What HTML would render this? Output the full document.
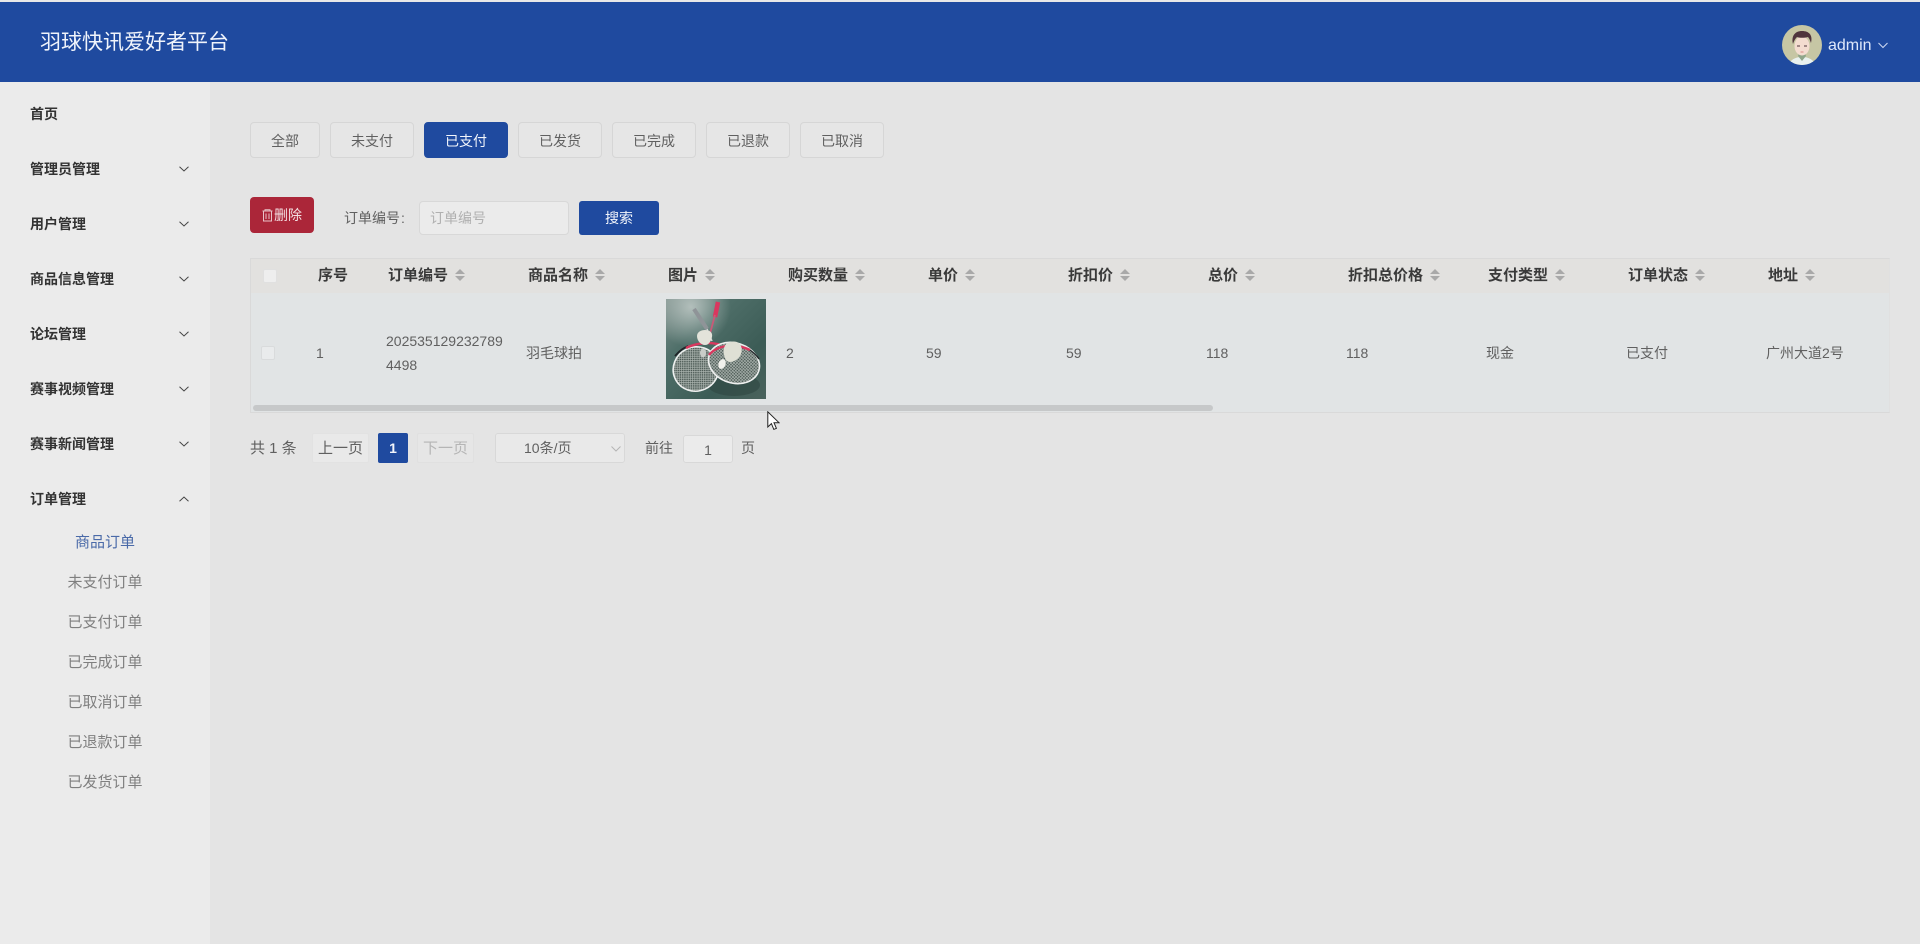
<!DOCTYPE html>
<html lang="zh-CN">
<head>
<meta charset="utf-8">
<title>羽球快讯爱好者平台</title>
<style>
*{box-sizing:border-box;margin:0;padding:0}
html,body{width:1920px;height:944px;overflow:hidden}
body{position:relative;background:#e4e4e4;font-family:"Liberation Sans","Noto Sans CJK SC",sans-serif;font-size:14px;color:#555}
.a{position:absolute;white-space:nowrap}
#top{position:absolute;left:0;top:0;width:1920px;height:2px;background:#e8e8e8}
#hd{position:absolute;left:0;top:2px;width:1920px;height:80px;background:#1f4a9f}
#side{position:absolute;left:0;top:82px;width:210px;height:862px;background:#ebebeb}
.m{position:absolute;left:30px;font-size:14px;font-weight:700;color:#333;line-height:20px;height:20px;white-space:nowrap}
.s{position:absolute;left:0;width:210px;text-align:center;font-size:15px;color:#7f7f7f;line-height:20px;height:20px;white-space:nowrap}
.chev{position:absolute;left:179px;width:10px;height:6px}
.tb{position:absolute;top:122px;height:36px;line-height:37px;text-align:center;border:1px solid #d6d6d6;border-radius:4px;background:#e6e6e6;color:#606060;font-size:14px}
.th{position:absolute;top:266px;height:20px;line-height:20px;font-weight:700;font-size:15px;color:#3a3a3a;white-space:nowrap}
.th i{display:inline-block;vertical-align:-1px;margin-left:7px;width:10px;height:12px;position:relative}
.th i:before,.th i:after{content:"";position:absolute;left:0;border-left:5px solid transparent;border-right:5px solid transparent}
.th i:before{top:0;border-bottom:5px solid #a9a9a9}
.th i:after{bottom:0;border-top:5px solid #a9a9a9}
.td{position:absolute;top:343px;height:20px;line-height:20px;font-size:14px;color:#606060;white-space:nowrap}
</style>
</head>
<body>
<div id="top"></div>
<div id="hd"></div>
<div class="a" style="left:40px;top:28px;font-size:21px;line-height:30px;color:#f0f4fb">羽球快讯爱好者平台</div>

<svg class="a" style="left:1782px;top:25px" width="40" height="40" viewBox="0 0 40 40">
  <defs><clipPath id="av"><circle cx="20" cy="20" r="20"/></clipPath></defs>
  <g clip-path="url(#av)">
    <rect width="40" height="40" fill="#c6c6a4"/>
    <path d="M7 40c1-5 6-8 13-8s12 3 13 8z" fill="#e9f1ef"/>
    <path d="M16 31l4 5 4-5-1-4h-6z" fill="#8fa58a"/>
    <ellipse cx="20" cy="21" rx="7.500" ry="9.500" fill="#f3dcd0"/>
    <path d="M11 19c-2-8 2-13 9-13s11 4 9 12c-1-3-2-5-3-6-4 1-8 1-11 0-2 2-3 4-4 7z" fill="#4f343d"/>
    <path d="M15 21h3M22 21h3" stroke="#4f343d" stroke-width=".9"/>
    <path d="M18.500 27h3" stroke="#d98a86" stroke-width="1"/>
  </g>
</svg>
<div class="a" style="left:1828px;top:36px;font-size:16px;line-height:20px;color:#dfe8fb">admin</div>
<svg class="a" style="left:1878px;top:42px" width="10" height="7" viewBox="0 0 10 7"><path d="M.5 1l4.500 4.500L9.500 1" fill="none" stroke="#cfdbf3" stroke-width="1"/></svg>

<div id="side"></div>
<div class="m" style="top:104px">首页</div>
<div class="m" style="top:159px">管理员管理</div>
<div class="m" style="top:214px">用户管理</div>
<div class="m" style="top:269px">商品信息管理</div>
<div class="m" style="top:324px">论坛管理</div>
<div class="m" style="top:379px">赛事视频管理</div>
<div class="m" style="top:434px">赛事新闻管理</div>
<div class="m" style="top:489px">订单管理</div>
<svg class="chev" style="top:166px" viewBox="0 0 10 6"><path d="M.5 .8L5 5l4.500-4.200" fill="none" stroke="#444" stroke-width="1"/></svg>
<svg class="chev" style="top:221px" viewBox="0 0 10 6"><path d="M.5 .8L5 5l4.500-4.200" fill="none" stroke="#444" stroke-width="1"/></svg>
<svg class="chev" style="top:276px" viewBox="0 0 10 6"><path d="M.5 .8L5 5l4.500-4.200" fill="none" stroke="#444" stroke-width="1"/></svg>
<svg class="chev" style="top:331px" viewBox="0 0 10 6"><path d="M.5 .8L5 5l4.500-4.200" fill="none" stroke="#444" stroke-width="1"/></svg>
<svg class="chev" style="top:386px" viewBox="0 0 10 6"><path d="M.5 .8L5 5l4.500-4.200" fill="none" stroke="#444" stroke-width="1"/></svg>
<svg class="chev" style="top:441px" viewBox="0 0 10 6"><path d="M.5 .8L5 5l4.500-4.200" fill="none" stroke="#444" stroke-width="1"/></svg>
<svg class="chev" style="top:496px" viewBox="0 0 10 6"><path d="M.5 5.200L5 1l4.500 4.200" fill="none" stroke="#444" stroke-width="1"/></svg>
<div class="s" style="top:533px;color:#4a6aa8">商品订单</div>
<div class="s" style="top:573px">未支付订单</div>
<div class="s" style="top:613px">已支付订单</div>
<div class="s" style="top:653px">已完成订单</div>
<div class="s" style="top:693px">已取消订单</div>
<div class="s" style="top:733px">已退款订单</div>
<div class="s" style="top:773px">已发货订单</div>

<div class="tb" style="left:250px;width:70px">全部</div>
<div class="tb" style="left:330px;width:84px">未支付</div>
<div class="tb" style="left:424px;width:84px;background:#1f4a9f;border-color:#1f4a9f;color:#f2f5fb">已支付</div>
<div class="tb" style="left:518px;width:84px">已发货</div>
<div class="tb" style="left:612px;width:84px">已完成</div>
<div class="tb" style="left:706px;width:84px">已退款</div>
<div class="tb" style="left:800px;width:84px">已取消</div>

<div class="a" style="left:250px;top:197px;width:64px;height:36px;background:#ab2639;border-radius:4px"></div>
<svg class="a" style="left:262px;top:209px" width="11" height="13" viewBox="0 0 11 13"><path d="M.5 2h10M3 2V.8h5V2M1.500 2v10h8V2M4 4.500V10M7 4.500V10" fill="none" stroke="#e8c3c8" stroke-width="1"/></svg>
<div class="a" style="left:274px;top:205px;font-size:14px;line-height:20px;color:#f3dfe2">删除</div>
<div class="a" style="left:344px;top:208px;font-size:14px;line-height:20px;color:#606060">订单编号<span style="margin-left:1px">:</span></div>
<div class="a" style="left:419px;top:201px;width:150px;height:34px;border:1px solid #d8d8d8;border-radius:4px;background:#ebebeb;padding-left:10px;line-height:33px;font-size:14px;color:#b0b0b0">订单编号</div>
<div class="a" style="left:579px;top:201px;width:80px;height:34px;background:#1f4a9f;border-radius:3px;text-align:center;line-height:35px;color:#f2f5fb;font-size:14px">搜索</div>

<div class="a" style="left:250px;top:258px;width:1640px;height:155px;border:1px solid #d9d9d9;border-right-color:#e0e0e0;background:#e1e4e5"></div>
<div class="a" style="left:251px;top:259px;width:1638px;height:34px;background:#e2e1df"></div>
<div class="a" style="left:263px;top:269px;width:14px;height:14px;background:#eeeeee;border:1px solid #e0e0e0;border-radius:2px"></div>
<div class="th" style="left:318px">序号</div>
<div class="th" style="left:388px">订单编号<i></i></div>
<div class="th" style="left:528px">商品名称<i></i></div>
<div class="th" style="left:668px">图片<i></i></div>
<div class="th" style="left:788px">购买数量<i></i></div>
<div class="th" style="left:928px">单价<i></i></div>
<div class="th" style="left:1068px">折扣价<i></i></div>
<div class="th" style="left:1208px">总价<i></i></div>
<div class="th" style="left:1348px">折扣总价格<i></i></div>
<div class="th" style="left:1488px">支付类型<i></i></div>
<div class="th" style="left:1628px">订单状态<i></i></div>
<div class="th" style="left:1768px">地址<i></i></div>

<div class="a" style="left:261px;top:346px;width:14px;height:14px;background:#e9ebec;border:1px solid #d9dbdc;border-radius:2px"></div>
<div class="td" style="left:316px">1</div>
<div class="a" style="left:386px;top:329px;font-size:14px;line-height:24px;color:#606060">202535129232789<br>4498</div>
<div class="td" style="left:526px">羽毛球拍</div>
<svg class="a" style="left:666px;top:299px" width="100" height="100" viewBox="0 0 100 100">
  <defs>
    <linearGradient id="bg" x1="0" y1="0" x2="1" y2="1">
      <stop offset="0" stop-color="#7d8f8b"/><stop offset=".3" stop-color="#50706a"/><stop offset=".7" stop-color="#3c5c56"/><stop offset="1" stop-color="#4a625c"/>
    </linearGradient>
    <radialGradient id="gl" cx=".25" cy=".08" r=".4"><stop offset="0" stop-color="#c6cfcc" stop-opacity=".8"/><stop offset="1" stop-color="#c6cfcc" stop-opacity="0"/></radialGradient>
    <pattern id="st" width="2.200" height="2.200" patternUnits="userSpaceOnUse" patternTransform="rotate(25)">
      <rect width="2.200" height="2.200" fill="#46544f"/><path d="M0 .6h2.200M.6 0v2.200" stroke="#aeb7b2" stroke-width=".7"/>
    </pattern>
  </defs>
  <rect width="100" height="100" fill="url(#bg)"/>
  <rect width="100" height="100" fill="url(#gl)"/>
  <ellipse cx="68" cy="86" rx="26" ry="11" fill="#2f4641" opacity=".6"/>
  <path d="M28 10L41 30" stroke="#8f9498" stroke-width="4"/>
  <path d="M41 30L46 42" stroke="#d5d7d6" stroke-width="1.500"/>
  <path d="M52 3L49 18" stroke="#d9375f" stroke-width="4.500"/>
  <path d="M49 16L42 42" stroke="#c95a78" stroke-width="1.800"/>
  <ellipse cx="30" cy="70" rx="23" ry="22" transform="rotate(-25 30 70)" fill="url(#st)" stroke="#eef0ef" stroke-width="1.600"/>
  <path d="M9 57C14 51 18 49 22 47" fill="none" stroke="#1f2427" stroke-width="1.800"/>
  <path d="M20 49C30 44 45 42 58 47" fill="none" stroke="#d8385e" stroke-width="2.400"/>
  <ellipse cx="68" cy="64" rx="26" ry="20" transform="rotate(18 68 64)" fill="url(#st)" stroke="#eef0ef" stroke-width="1.600"/>
  <path d="M43 56C50 47 68 43 84 51" fill="none" stroke="#d8385e" stroke-width="2.400"/>
  <path d="M84 51C88 54 91 57 93 60" fill="none" stroke="#1f2427" stroke-width="1.400"/>
  <path d="M31 37c0-4 4-6 8-6s8 2 7 7c-1 4-3 8-7 8s-8-4-8-9z" fill="#e3e3da"/>
  <ellipse cx="37" cy="54" rx="3" ry="4.500" fill="#c9cdc8"/>
  <path d="M60 45c6-4 13-3 15 2s0 12-7 15c-4 2-8 1-9-3-2-5-2-10 1-14z" fill="#dfe0d5"/>
  <ellipse cx="56" cy="65" rx="3.500" ry="5" transform="rotate(20 56 65)" fill="#f1f1ec"/>
</svg>
<div class="td" style="left:786px">2</div>
<div class="td" style="left:926px">59</div>
<div class="td" style="left:1066px">59</div>
<div class="td" style="left:1206px">118</div>
<div class="td" style="left:1346px">118</div>
<div class="td" style="left:1486px">现金</div>
<div class="td" style="left:1626px">已支付</div>
<div class="td" style="left:1766px">广州大道2号</div>
<div class="a" style="left:253px;top:405px;width:960px;height:6px;background:#c6c8c9;border-radius:3px"></div>

<div class="a" style="left:250px;top:439px;font-size:15px;line-height:20px;color:#606060">共 1 条</div>
<div class="a" style="left:312px;top:433px;width:57px;height:30px;background:#e9e9e9;border:1px solid #e2e2e2;border-radius:2px;text-align:center;line-height:30px;color:#606060;font-size:15px">上一页</div>
<div class="a" style="left:378px;top:433px;width:30px;height:30px;background:#1f4a9f;border-radius:2px;text-align:center;line-height:30px;color:#f2f5fb;font-weight:700;font-size:14px">1</div>
<div class="a" style="left:417px;top:433px;width:57px;height:30px;background:#e6e6e6;border:1px solid #e0e0e0;border-radius:2px;text-align:center;line-height:30px;color:#b5b5b5;font-size:15px">下一页</div>
<div class="a" style="left:495px;top:433px;width:130px;height:30px;background:#e9e9e9;border:1px solid #d8d8d8;border-radius:3px;padding-left:28px;line-height:28px;color:#606060;font-size:14px">10条/页</div>
<svg class="a" style="left:611px;top:446px" width="10" height="6" viewBox="0 0 10 6"><path d="M.5 .5L5 5l4.500-4.500" fill="none" stroke="#b5b5b5" stroke-width="1"/></svg>
<div class="a" style="left:645px;top:438px;font-size:14px;line-height:20px;color:#606060">前往</div>
<div class="a" style="left:683px;top:435px;width:50px;height:28px;background:#ebebeb;border:1px solid #d8d8d8;border-radius:3px;text-align:center;line-height:28px;color:#606060;font-size:14px">1</div>
<div class="a" style="left:741px;top:438px;font-size:14px;line-height:20px;color:#606060">页</div>

<svg class="a" style="left:767px;top:411px" width="13" height="20" viewBox="0 0 13 20"><path d="M.8 .8V16l3.600-3.400 2.400 5.800 2.600-1.100-2.400-5.600h5z" fill="#fff" stroke="#222" stroke-width="1"/></svg>
</body>
</html>
